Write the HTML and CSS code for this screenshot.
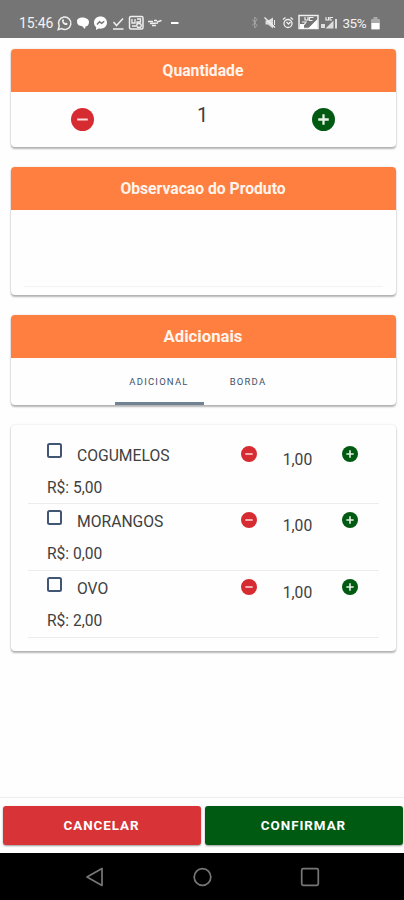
FILE: index.html
```html
<!DOCTYPE html>
<html lang="pt-BR">
<head>
<meta charset="utf-8">
<title>Produto</title>
<link rel="stylesheet" href="styles.css">
</head>
<body>
<svg class="defs" width="0" height="0">
  <symbol id="minus" viewBox="0 0 24 24"><circle cx="12" cy="12" r="12" fill="#d52b31"/><path d="M6.5 12h11" stroke="#fbdcdc" stroke-width="2.2"/></symbol>
  <symbol id="plus" viewBox="0 0 24 24"><circle cx="12" cy="12" r="12" fill="#005a12"/><path d="M6.5 12h11M12 6.5v11" stroke="#e6f2e6" stroke-width="2.4"/></symbol>
</svg>
<header class="status">
  <span class="clock">15:46</span>
  <svg class="left-icons" width="126" height="18" viewBox="0 0 126 18" fill="none" stroke="#efefef">
    <path d="M2.2 15.6l1-3.5A6.2 6.2 0 1 1 5.6 14.6z" stroke-width="1.5"/>
    <path d="M6.2 5.7c-.8 3 2 5.8 5 5.3l.4-1.6-1.5-.8-.8.7-1.8-1.8.6-.8-.7-1.6z" fill="#efefef" stroke="none"/>
    <path d="M21 7.500c0-3 2.500-4 5.500-4s6.500 1.500 6.500 4.500-2 4.500-3.500 4.500L29 15l-3-3c-3 0-5-1.500-5-4.500z" fill="#fff" stroke="none"/>
    <path d="M44.500 2.500c-4 0-6.500 2.700-6.500 6 0 2 .8 3.600 2.100 4.600V16l2.500-1.500c5 .8 8.400-2 8.400-6 0-3.300-2.500-6-6.500-6z" fill="#fff" stroke="none"/>
    <path d="M41 10.500l2.500-2.700 2.200 1.600 2.500-2.200" stroke="#777" stroke-width="1.500"/>
    <path d="M57.500 8l3 3.500 6.500-7M57 15h10.500" stroke-width="1.500"/>
    <rect x="73.500" y="2.500" width="13.500" height="12.500" rx="1.500" fill="#777" stroke-width="1.500"/>
    <path d="M76 5v4h3V5M81 5h3.500v3H81v2M76 12h4M83 9.500c3 0 3 4 0 4s-3-4 0-4" stroke-width="1.300"/>
    <path d="M92 7.500h5M98 6.500h3M101 8l4.500-1.500M94 9.500l8-.5M96 11.500h4" stroke-width="1.500"/>
    <path d="M115 9h7.500" stroke="#fff" stroke-width="2"/>
  </svg>
  <svg class="right-icons" width="91" height="18" viewBox="0 0 91 18" fill="none" stroke="#efefef">
    <path d="M2.500 5.500l4.500 6-2.300 2.500V3L7 5.500l-4.500 6" stroke="#aaa" stroke-width=".9"/>
    <path d="M15.500 6.500h2.500l5-3v11l-5-4h-2.500z" fill="#ddd" stroke="none"/><path d="M14.500 3.500l10.500 10" stroke-width="1.300"/><path d="M24.500 6v5" stroke-width="1"/>
    <circle cx="38" cy="9.500" r="4" stroke-width="1.300"/><path d="M33 5.500l2.500-2M43 5.500l-2.500-2M36.500 8l2 2 2-2" stroke-width="1.300"/>
    <rect x="49" y="1.500" width="19" height="13" stroke-width="1.500"/><path d="M58 14.500L67.500 5v9.500zM50 10h4v5h-4z" fill="#fff" stroke="none"/><path d="M55 3v3h3V3M63.500 3.500h-4v3h3M52 8h4l-2 3" stroke-width="1.200"/>
    <path d="M71 10h4v4h-4zM75.500 14.500l8-8v8zM85 5h2v9.500h-2z" fill="#ddd" stroke="none"/><path d="M76 3v3h2.500V3M83 3.500h-3v2.500h2" stroke-width="1.100"/>
  </svg>
  <span class="battery-text">35%</span>
  <svg class="battery" width="9" height="13" viewBox="0 0 9 13"><path d="M2.500 0h4v2H8q1 0 1 1v9q0 1-1 1H1q-1 0-1-1V3q0-1 1-1h1.500z" fill="#aaa"/><path d="M.5 6h8v6h-8z" fill="#fff"/></svg>
</header>
<main>
  <section class="card quantity">
    <h2>Quantidade</h2>
    <div class="stepper">
      <svg class="big"><use href="#minus"/></svg>
      <span class="count">1</span>
      <svg class="big"><use href="#plus"/></svg>
    </div>
  </section>
  <section class="card notes">
    <h2>Observacao do Produto</h2>
    <div class="note-field"></div>
  </section>
  <section class="card extras">
    <h2 class="wide">Adicionais</h2>
    <nav class="tabs"><span class="tab active">ADICIONAL</span><span class="tab">BORDA</span></nav>
  </section>
  <section class="card list">
    <div class="item">
      <div class="info"><div class="name"><i class="box"></i><span>COGUMELOS</span></div><div class="price">R$: 5,00</div></div>
      <svg class="small"><use href="#minus"/></svg><span class="amount">1,00</span><svg class="small"><use href="#plus"/></svg>
    </div>
    <div class="item">
      <div class="info"><div class="name"><i class="box"></i><span>MORANGOS</span></div><div class="price">R$: 0,00</div></div>
      <svg class="small"><use href="#minus"/></svg><span class="amount">1,00</span><svg class="small"><use href="#plus"/></svg>
    </div>
    <div class="item">
      <div class="info"><div class="name"><i class="box"></i><span>OVO</span></div><div class="price">R$: 2,00</div></div>
      <svg class="small"><use href="#minus"/></svg><span class="amount">1,00</span><svg class="small"><use href="#plus"/></svg>
    </div>
  </section>
</main>
<footer class="actions"><button class="cancel">CANCELAR</button><button class="confirm">CONFIRMAR</button></footer>
<div class="system">
  <svg width="20" height="20" viewBox="0 0 20 20"><path d="M17 1.500v17L2 10z"/></svg>
  <svg width="20" height="20" viewBox="0 0 20 20"><circle cx="9.500" cy="10" r="8.300"/></svg>
  <svg width="20" height="20" viewBox="0 0 20 20"><rect x="1.700" y="1.700" width="16.600" height="16.600" rx="1.500"/></svg>
</div>
</body>
</html>
```
FILE: styles.css
```css
* { box-sizing: border-box; }
body {
  margin: 0;
  width: 404px;
  height: 900px;
  display: flex;
  flex-direction: column;
  overflow: hidden;
  background: #fefefe;
  color: #404040;
  font-family: Roboto, sans-serif;
}
svg { display: block; flex: none; }
.defs { position: absolute; }
.status {
  height: 37.5px;
  flex: none;
  display: flex;
  align-items: center;
  padding: 9px 24px 0 19px;
  background: #757575;
  color: #f2f2f2;
  font-size: 14px;
}
.clock { width: 37px; letter-spacing: -.1px; }
.right-icons { margin-left: auto; }
.battery-text { width: 29px; padding-left: 1.500px; font-size: 13.500px; letter-spacing: -.5px; }
.battery { margin-left: 1px; }
main { flex: 1; padding: 11px 8px 0 11px; }
.card {
  width: 385px;
  overflow: hidden;
  border-radius: 4px;
  background: #fefefe;
  box-shadow: 0 2px 2px rgba(0,0,0,.28), 0 0 2px rgba(0,0,0,.16);
}
h2 {
  height: 43px;
  margin: 0;
  padding-right: 1px;
  background: #ff7f41;
  color: #fff5ec;
  font-size: 15.7px;
  font-weight: 700;
  line-height: 43px;
  text-align: center;
}
.wide { font-size: 16.7px; }
.quantity { height: 98px; }
.stepper {
  display: flex;
  justify-content: space-between;
  padding: 16.5px 61px 0 60px;
}
.big { width: 23px; height: 23px; }
.count { font-size: 20px; line-height: 24px; margin: -5px 1px 0 0; }
.notes { height: 128px; margin-top: 20px; }
.note-field { height: 77px; margin: 0 13px; border-bottom: 1px solid #f3f3f3; }
.extras { height: 90px; margin-top: 20px; }
.tabs { height: 47px; display: flex; justify-content: center; }
.tab {
  width: 89px;
  line-height: 47px;
  color: #3e526a;
  font-size: 9.5px;
  font-weight: 400;
  letter-spacing: 1.2px;
  text-align: center;
}
.active { border-bottom: 3px solid #718393; }
.list { height: 226px; margin-top: 20px; padding: 13px 17px 0; }
.item {
  height: 66.8px;
  display: flex;
  align-items: flex-start;
  padding-left: 19px;
  border-bottom: 1px solid #ececec;
}
.info { width: 194px; }
.name { height: 34px; display: flex; font-size: 15.7px; line-height: 35px; }
.box {
  width: 15px;
  height: 15px;
  margin: 5.5px 15px 0 0;
  border: 2px solid #405672;
  border-radius: 2.5px;
}
.price { font-size: 15.6px; line-height: 32px; }
.small { width: 16px; height: 16px; margin-top: 8px; }
.amount { width: 85px; margin-top: 12px; padding-right: 4px; font-size: 15.7px; line-height: 20px; text-align: center; }
.actions {
  height: 56.5px;
  flex: none;
  display: flex;
  gap: 4px;
  padding: 8.5px 1px 8.5px 3px;
  border-top: 1.5px solid #eee;
}
button {
  flex: 1;
  padding: 0 1px 0 0;
  border: 0;
  border-radius: 3px;
  box-shadow: 0 1px 2px rgba(0,0,0,.4);
  color: #fff;
  font: 700 13.4px Roboto, sans-serif;
  letter-spacing: .95px;
}
.cancel { background: #d83336; }
.confirm { background: #005a12; }
.system {
  height: 47px;
  flex: none;
  display: flex;
  justify-content: space-between;
  padding: 14px 84px 0 85px;
  background: #000;
}
.system svg { fill: none; stroke: #777; stroke-width: 1.7; stroke-linejoin: round; }
```
